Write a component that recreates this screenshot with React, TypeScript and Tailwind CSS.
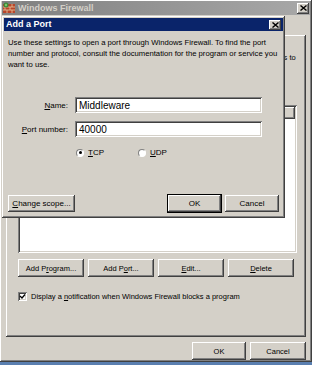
import type React from "react"

const raised =
  "shadow-[inset_-1px_-1px_#404040,inset_1px_1px_#ffffff,inset_-2px_-2px_#808080,inset_2px_2px_#d4d0c8]"
const sunken =
  "shadow-[inset_1px_1px_#808080,inset_-1px_-1px_#ffffff,inset_2px_2px_#404040,inset_-2px_-2px_#d4d0c8]"

function Btn({ children, className = "", isDefault = false }: { children: React.ReactNode; className?: string; isDefault?: boolean }) {
  return (
    <div
      className={`flex items-center justify-center bg-[#d4d0c8] text-black ${isDefault ? "outline outline-1 outline-black" : ""} ${raised} ${className}`}
    >
      {children}
    </div>
  )
}

function CloseBox({ className = "" }: { className?: string }) {
  return (
    <div className={`flex items-center justify-center bg-[#d4d0c8] ${raised} ${className}`}>
      <svg width="7" height="6" viewBox="0 0 7 6">
        <path d="M0.5 0.5 L6.5 5.5 M6.5 0.5 L0.5 5.5" stroke="#000" strokeWidth="1.4" />
      </svg>
    </div>
  )
}

function Radio({ checked }: { checked?: boolean }) {
  return (
    <div className="w-[8px] h-[8px] rounded-full bg-white border border-[#808080] border-r-white border-b-white flex items-center justify-center">
      {checked && <div className="w-[3px] h-[3px] rounded-full bg-black" />}
    </div>
  )
}

function FirewallIcon() {
  return (
    <svg width="12" height="12" viewBox="0 0 12 12">
      <rect x="0" y="2" width="12" height="9" fill="#b8452a" />
      <path d="M0 5 H12 M0 8 H12 M4 2 V5 M9 2 V5 M2 5 V8 M7 5 V8 M4 8 V11 M9 8 V11" stroke="#e8c9a0" strokeWidth="0.8" />
      <circle cx="3" cy="3" r="2.5" fill="#3c8a3a" />
      <circle cx="3" cy="3" r="1.2" fill="#7cc86a" />
    </svg>
  )
}

export default function App() {
  return (
    <div className="relative w-[312px] h-[365px] bg-[#5a7fb0] overflow-hidden font-['Liberation_Sans',Arial,sans-serif] text-[7.5px] leading-[11px] text-black">
      {/* Windows Firewall window */}
      <div className={`flex flex-col h-[362px] bg-[#d4d0c8] ${raised}`}>
        <div className="mx-[2px] mt-[1px] h-[14px] flex items-center bg-gradient-to-r from-[#808080] to-[#a8a8a8] px-[1px]">
          <FirewallIcon />
          <span className="ml-[3px] font-bold text-[9px] text-[#d4d0c8]">Windows Firewall</span>
          <CloseBox className="ml-auto w-[12px] h-[11px]" />
        </div>

        {/* tab strip, hidden behind dialog */}
        <div className="h-[20px]" />

        <div className={`mx-[6px] h-[302px] flex flex-col pl-[12px] pr-[9px] bg-[#d4d0c8] ${raised}`}>
          <p className="mt-[6px] h-[44px] leading-[11px]">
            Windows Firewall is blocking incoming network connections, except for the programs and services selected below. Adding exceptions allows some programs to work better but might increase your security risk.
          </p>
          <div className="mt-[6px]">Programs and Services:</div>
          <div className={`mt-[3px] h-[148px] bg-white p-[2px] ${sunken}`}>
            <div className={`h-[12px] bg-[#d4d0c8] ${raised}`} />
          </div>
          <div className="mt-[6px] flex gap-[4px] pr-[1px]">
            <Btn className="w-[66px] h-[18px]">Add P<u>r</u>ogram...</Btn>
            <Btn className="w-[66px] h-[18px]">Add P<u>o</u>rt...</Btn>
            <Btn className="w-[66px] h-[18px]"><u>E</u>dit...</Btn>
            <Btn className="w-[66px] h-[18px]"><u>D</u>elete</Btn>
          </div>
          <div className="mt-[14px] flex items-center">
            <div className={`w-[9px] h-[9px] bg-white flex items-center justify-center ${sunken}`}>
              <svg width="7" height="7" viewBox="0 0 7 7">
                <path d="M1 3 L3 5 L6 1.5" stroke="#000" strokeWidth="1.3" fill="none" />
              </svg>
            </div>
            <span className="ml-[4px]">Display a <u>n</u>otification when Windows Firewall blocks a program</span>
          </div>
        </div>

        <div className="mt-[5px] flex justify-end gap-[4px] pr-[6px]">
          <Btn className="w-[54px] h-[18px]">OK</Btn>
          <Btn className="w-[56px] h-[18px]">Cancel</Btn>
        </div>
      </div>

      {/* Add a Port dialog */}
      <div className={`absolute left-[2px] top-[16px] w-[283px] h-[202px] flex flex-col bg-[#d4d0c8] text-[8px] ${raised}`}>
        <div className="mx-[2px] mt-[2px] h-[13px] flex items-center bg-[#0a246a] px-[2px]">
          <span className="font-bold text-[9px] text-white">Add a Port</span>
          <CloseBox className="ml-auto w-[12px] h-[10px]" />
        </div>

        <p className="mt-[6px] pl-[6px] pr-[2px] text-[7.7px] leading-[11px]">
          Use these settings to open a port through Windows Firewall. To find the port number and protocol, consult the documentation for the program or service you want to use.
        </p>

        <div className="mt-[27px] flex items-center">
          <div className="w-[66px] text-right"><u>N</u>ame:</div>
          <div className={`ml-[7px] w-[187px] h-[16px] bg-white flex items-center pl-[4px] text-[10px] ${sunken}`}>Middleware</div>
        </div>
        <div className="mt-[8px] flex items-center">
          <div className="w-[66px] text-right"><u>P</u>ort number:</div>
          <div className={`ml-[7px] w-[187px] h-[16px] bg-white flex items-center pl-[4px] text-[10px] ${sunken}`}>40000</div>
        </div>

        <div className="mt-[10px] h-[11px] flex items-center pl-[74px]">
          <Radio checked />
          <span className="ml-[4px]"><u>T</u>CP</span>
          <div className="ml-[34px]"><Radio /></div>
          <span className="ml-[4px]"><u>U</u>DP</span>
        </div>

        <div className="mt-[37px] flex items-center px-[6px]">
          <Btn className="w-[67px] h-[17px]"><u>C</u>hange scope...</Btn>
          <Btn isDefault className="ml-auto w-[53px] h-[17px]">OK</Btn>
          <Btn className="ml-[4px] w-[54px] h-[17px]">Cancel</Btn>
        </div>
      </div>
    </div>
  )
}
